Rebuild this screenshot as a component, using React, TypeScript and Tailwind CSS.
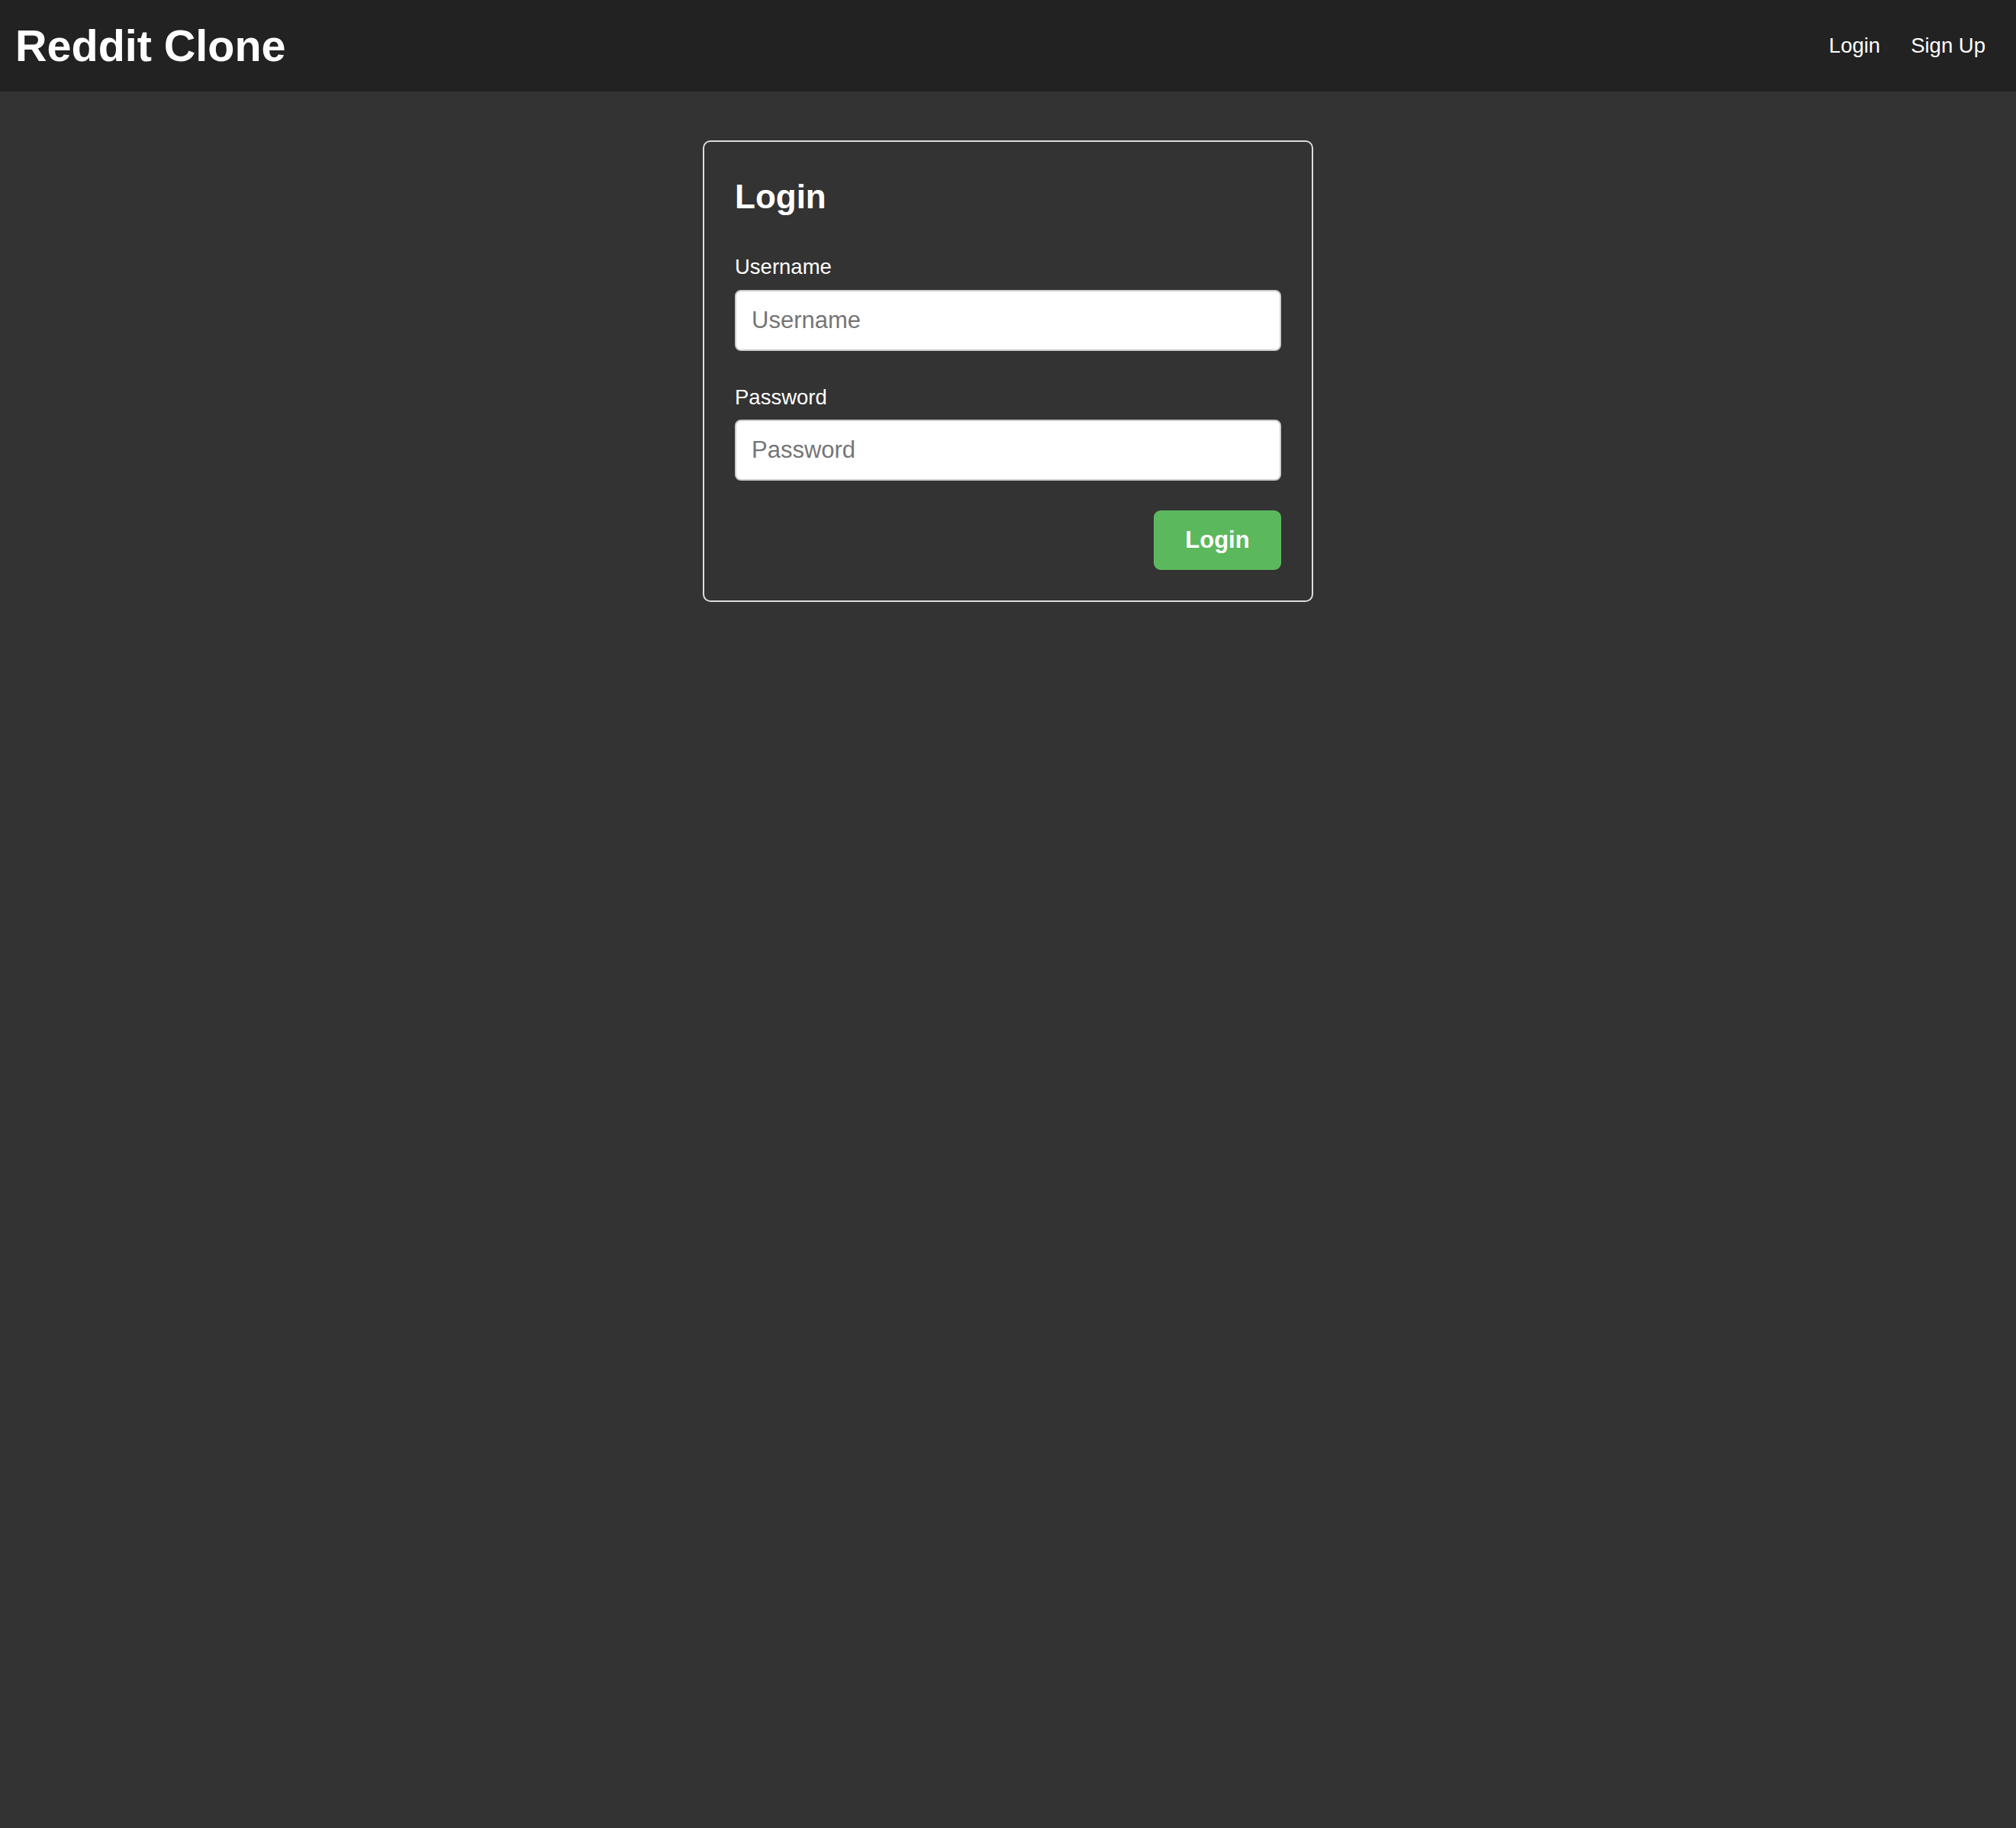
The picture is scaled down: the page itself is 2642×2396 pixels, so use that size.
import React from "react";

export default function App() {
  return (
    <div
      className="min-h-[2396px] w-full bg-[#333333] text-white"
      style={{ fontFamily: '"Liberation Sans", Arial, sans-serif' }}
    >
      <header className="flex h-[120px] items-center justify-between bg-[#222222] px-[20px]">
        <h1 className="text-[57.5px] font-bold leading-[66px] text-white">Reddit Clone</h1>
        <nav className="flex items-center">
          <a className="px-[20px] text-[27.5px] leading-[32px] text-white" href="#">
            Login
          </a>
          <a className="px-[20px] text-[27.5px] leading-[32px] text-white" href="#">
            Sign Up
          </a>
        </nav>
      </header>

      <main className="flex justify-center pt-[64px]">
        <div className="box-border w-[800px] rounded-[10px] border-2 border-[#dddddd] bg-[#333333] px-[40px] pt-[40px] pb-[40px]">
          <h2 className="mt-[6px] text-[44px] font-bold leading-[52px] text-white">Login</h2>

          <div className="mt-[50px] flex flex-col">
            <label className="text-[27.5px] leading-[32px] text-white">Username</label>
            <input
              type="text"
              placeholder="Username"
              className="mt-[14px] box-border h-[80px] w-full rounded-[8px] border-2 border-[#cccccc] bg-white px-[20px] text-[31px] text-black outline-none placeholder:text-[#757575]"
              style={{ fontFamily: '"Liberation Sans", Arial, sans-serif' }}
            />
          </div>

          <div className="mt-[45px] flex flex-col">
            <label className="text-[27.5px] leading-[32px] text-white">Password</label>
            <input
              type="password"
              placeholder="Password"
              className="mt-[13px] box-border h-[80px] w-full rounded-[8px] border-2 border-[#cccccc] bg-white px-[20px] text-[31px] text-black outline-none placeholder:text-[#757575]"
              style={{ fontFamily: '"Liberation Sans", Arial, sans-serif' }}
            />
          </div>

          <div className="mt-[39px] flex justify-end">
            <button
              type="button"
              className="flex h-[78px] w-[167px] items-center justify-center rounded-[9px] bg-[#5cb85c] text-[31px] font-bold text-white"
              style={{ fontFamily: '"Liberation Sans", Arial, sans-serif' }}
            >
              Login
            </button>
          </div>
        </div>
      </main>
    </div>
  );
}
